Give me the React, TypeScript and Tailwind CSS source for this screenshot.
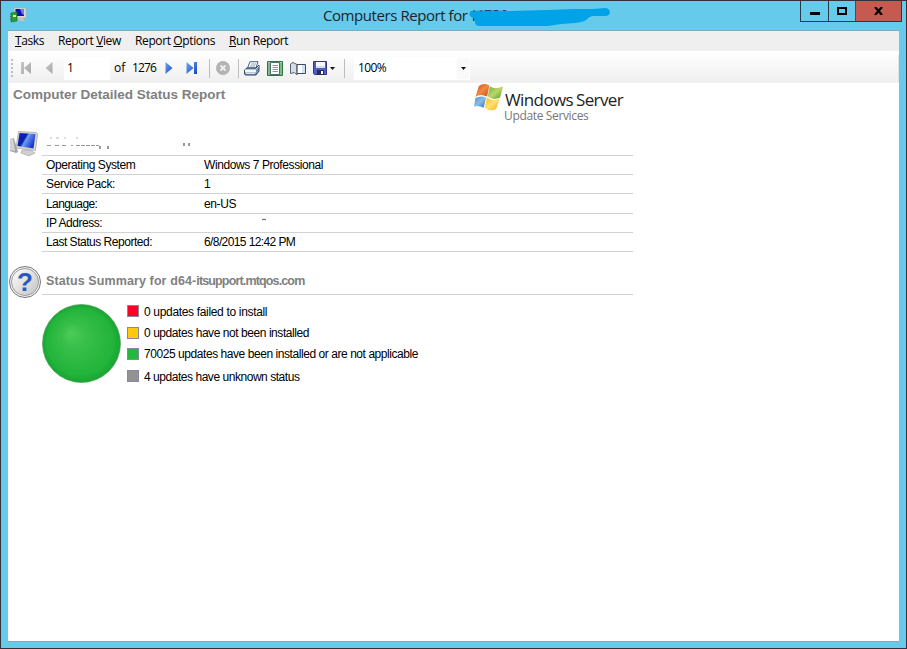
import React from "react";

const details = [
  { label: "Operating System", value: "Windows 7 Professional", h: "h-[19px]", lt: "tracking-[-0.42px]", vt: "tracking-[-0.41px]" },
  { label: "Service Pack:", value: "1", h: "h-[19px]", lt: "tracking-[-0.33px]", vt: "" },
  { label: "Language:", value: "en-US", h: "h-[20px]", lt: "tracking-[-0.6px]", vt: "tracking-[-0.4px]" },
  { label: "IP Address:", value: "", h: "h-[19px]", lt: "tracking-[-0.45px]", vt: "" },
  { label: "Last Status Reported:", value: "6/8/2015 12:42 PM", h: "h-[19px]", lt: "tracking-[-0.48px]", vt: "tracking-[-0.6px]" },
];

const legend = [
  { color: "bg-[#fb0321]", text: "0 updates failed to install", h: "h-[22px]", t: "leading-[16px] tracking-[-0.33px]" },
  { color: "bg-[#ffc90e]", text: "0 updates have not been installed", h: "h-[21px]", t: "leading-[14px] tracking-[-0.44px]" },
  { color: "bg-[#22b93c]", text: "70025 updates have been installed or are not applicable", h: "h-[22px]", t: "leading-[14px] tracking-[-0.44px]" },
  { color: "bg-[#929292]", text: "4 updates have unknown status", h: "h-[24px]", t: "leading-[16px] tracking-[-0.46px]" },
];

function AppIcon() {
  return (
    <svg width="17" height="17" viewBox="0 0 17 17">
      <path d="M4 1h12v10H5z" fill="#ddd9cf" stroke="#b6b3ab" strokeWidth=".7" />
      <path d="M5.500 2H14v7H5.500z" fill="#1010b8" />
      <path d="M10 2h4v6l-2-1z" fill="#5c86ed" />
      <path d="M8 11h5l2 3H9z" fill="#c5c2bb" />
      <path d="M1 6l6-1v9l-6 1z" fill="#2c9c33" stroke="#17721f" strokeWidth=".6" />
      <path d="M3 8h3v2H3z" fill="#d6f0c0" />
      <path d="M0 7h2M0 9.500h2M0 12h2" stroke="#526c57" />
    </svg>
  );
}

function ScribbledTitle() {
  return (
    <svg className="absolute left-[467px] top-[5px]" width="146" height="24" viewBox="467 5 146 24">
      <path d="M471 11C468 14 470 17 473 18L475 22Q475 26 480 26L548 26L561 24L575 23Q586 22 588 18L592 16L606 16Q610 15 610 12Q609 8 605 8L593 9L574 9L548 10L510 11L490 10Z" fill="#00a2e8" />
      <path d="M473 11h2M480 11h2M485 10.500h6M494 10.500h4M503 10.500h3" stroke="#31434c" />
      <path d="M473.500 18v3" stroke="#31434c" strokeWidth="1.300" />
    </svg>
  );
}

function Nav({ kind }: { kind: "first" | "prev" | "next" | "last" }) {
  const gray = kind === "first" || kind === "prev";
  const id = "nav-" + kind;
  return (
    <svg width="14" height="14" viewBox="0 0 14 14" className="block">
      <defs>
        <linearGradient id={id} x2="1" y2="1">
          <stop stopColor={gray ? "#c8c8c8" : "#71a5fa"} />
          <stop offset="1" stopColor={gray ? "#a7a7a7" : "#1646c0"} />
        </linearGradient>
      </defs>
      {kind === "first" && <path d="M1 1h3v12H1zM11 1v12L4 7z" fill={`url(#${id})`} />}
      {kind === "prev" && <path d="M8.500 1v12L1.500 7z" fill={`url(#${id})`} />}
      {kind === "next" && <path d="M2.500 1l7 6-7 6z" fill={`url(#${id})`} />}
      {kind === "last" && <path d="M1.500 1l7 6-7 6zM9 1h3v12H9z" fill={`url(#${id})`} />}
    </svg>
  );
}

function StopIcon() {
  return (
    <svg width="14" height="14" viewBox="0 0 14 14">
      <circle cx="7" cy="7" r="6.700" fill="#b4b4b4" stroke="#a9a9a9" strokeWidth=".5" />
      <path d="M4.500 4.500l5 5M9.500 4.500l-5 5" stroke="#ededed" strokeWidth="2" />
    </svg>
  );
}

function PrinterIcon() {
  return (
    <svg width="16" height="15" viewBox="0 0 16 15">
      <path d="M6 .7h8L12 7H3.500z" fill="#fafcff" stroke="#495e7f" />
      <path d="M7 3h5M6 5h5" stroke="#91a4bc" />
      <path d="M3 7h9l3-3v6l-3 4H1.500Q.5 14 .5 12V9z" fill="#7a91b4" stroke="#354a69" />
      <path d="M1 8.500h11v3H1z" fill="#f3f6fa" />
      <path d="M2 12.500h9" stroke="#dde6f1" />
      <path d="M12 8l3-3" stroke="#c5d2e5" />
    </svg>
  );
}

function LayoutIcon() {
  return (
    <svg width="16" height="15" viewBox="0 0 16 15">
      <path d="M.5.5h15v14H.5z" fill="#7fb988" stroke="#2c7441" />
      <path d="M1 1h14v1H1z" fill="#b5d5b6" />
      <path d="M3.500 1.500h9v12h-9z" fill="#fff" stroke="#334b5e" strokeWidth=".8" />
      <path d="M5.500 4.500h5.500M5.500 6.500h5.500M5.500 8.500h5.500M5.500 10.500h5.500" stroke="#8995a0" />
    </svg>
  );
}

function BookIcon() {
  return (
    <svg width="16" height="15" viewBox="0 0 16 15">
      <path d="M.5 3L3 1.500l4 2v10.500l-2.500-2.500-4 1z" fill="#d5dce7" stroke="#5b6370" />
      <path d="M7 3.500h8.500v9H7z" fill="#cfe0f6" stroke="#424b5c" />
      <path d="M8 4h4v8H8z" fill="#fff" />
    </svg>
  );
}

function SaveIcon() {
  return (
    <svg width="14" height="14" viewBox="0 0 14 14">
      <path d="M.5.5h13v13h-12l-1-1z" fill="#525cc5" stroke="#35378a" />
      <path d="M3 1h9v6H3z" fill="#f6f9ff" />
      <path d="M3 5h9v2H3z" fill="#d0dff2" />
      <path d="M4 9h7v5H4z" fill="#292d53" />
      <path d="M8 10h2v3H8z" fill="#fff" />
    </svg>
  );
}

function Caret() {
  return <svg width="5" height="3" viewBox="0 0 5 3" className="block"><path d="M0 0h5L2.500 3z" fill="#111" /></svg>;
}

function Divider() {
  return <div className="h-[19px] w-px shrink-0 bg-[#bdbdbd]" />;
}

function Flag() {
  return (
    <svg width="30" height="29" viewBox="0 0 31 29">
      <defs>
        <linearGradient id="flag-red" x2="1" y2="1"><stop stopColor="#d84a20" /><stop offset=".5" stopColor="#ef8a41" /><stop offset="1" stopColor="#cf401d" /></linearGradient>
        <linearGradient id="flag-green" x2="1" y2="1"><stop stopColor="#6faf35" /><stop offset=".5" stopColor="#bad66a" /><stop offset="1" stopColor="#509b26" /></linearGradient>
        <linearGradient id="flag-blue" x2="1" y2="1"><stop stopColor="#4f8fce" /><stop offset=".5" stopColor="#87bee8" /><stop offset="1" stopColor="#286db0" /></linearGradient>
        <linearGradient id="flag-yellow" x2="1" y2="1"><stop stopColor="#f5b91c" /><stop offset=".5" stopColor="#ffe271" /><stop offset="1" stopColor="#f1a915" /></linearGradient>
      </defs>
      <path d="M5 2.500Q10-1 16 2L13.500 13.500Q6 10 1.500 14z" fill="url(#flag-red)" />
      <path d="M16.500 3Q22 7 30 3L27 14.500Q20 18 14 13.500z" fill="url(#flag-green)" />
      <path d="M1.500 15Q7 12 12.500 14.500L10 25Q4 22 0 24z" fill="url(#flag-blue)" />
      <path d="M13.500 14.500Q19 19 26.500 15.500L23 26Q17 30 11 25z" fill="url(#flag-yellow)" />
    </svg>
  );
}

function ComputerIcon() {
  return (
    <svg width="29" height="28" viewBox="0 0 29 28">
      <defs>
        <linearGradient id="screen" x2="1" y2=".5"><stop stopColor="#1428bd" /><stop offset=".45" stopColor="#0a1ca8" /><stop offset=".55" stopColor="#6c9df5" /><stop offset="1" stopColor="#1835ce" /></linearGradient>
      </defs>
      <path d="M0 9l4-1 4 14-2 1-6-2z" fill="#a5a5a5" />
      <path d="M0 9l3-1 2 13-5-1z" fill="#d2d2d2" />
      <path d="M12 20h8l5 3-6 3-8-3z" fill="#d0d0d0" stroke="#a0a0a0" strokeWidth=".6" />
      <path d="M8.500 1.500L26 2.500Q28 3 27.500 5l-2 15.500L6 18z" fill="#dad8d2" stroke="#a3a19c" strokeWidth=".7" />
      <path d="M9.500 3l16 1-2 14.500L7.500 16z" fill="url(#screen)" />
    </svg>
  );
}

function HelpIcon() {
  return (
    <div className="flex h-8 w-8 items-center justify-center rounded-full border border-[#777] bg-[#f4f4f4]">
      <div className="flex h-[28px] w-[28px] items-center justify-center rounded-full border border-[#9a9a9a] bg-linear-to-br from-white to-[#c4c4c4]">
        <span className="font-['Liberation_Sans',Arial,sans-serif] text-[26px] leading-[24px] font-bold text-[#2c58c2]">?</span>
      </div>
    </div>
  );
}

function StatusPie() {
  return (
    <svg width="80" height="80" viewBox="0 0 80 80">
      <defs>
        <radialGradient id="pie" cx=".5" cy=".5" fx=".36" fy=".36" r=".5"><stop stopColor="#4bce58" /><stop offset=".3" stopColor="#39bf4b" /><stop offset=".85" stopColor="#22b43b" /><stop offset="1" stopColor="#18a533" /></radialGradient>
      </defs>
      <circle cx="39.500" cy="39.500" r="39" fill="url(#pie)" stroke="#529d5a" strokeWidth=".7" />
    </svg>
  );
}

export default function App() {
  return (
    <div className="flex h-[649px] w-[907px] flex-col overflow-hidden border border-[#33323b] bg-[#66caea] px-[7px] pb-[6px] font-['Liberation_Sans',Arial,sans-serif] text-[12px] text-black">
      <header className="flex h-[29px] shrink-0 font-['Open_Sans','Noto_Sans',sans-serif]">
        <div className="w-[315px] pt-[6px] pl-[2px]"><AppIcon /></div>
        <h1 className="pt-[3px] text-[15px] leading-[23px] tracking-[-0.43px] whitespace-nowrap text-[#17262c]">Computers Report for</h1>
        <ScribbledTitle />
        <div className="mr-[-3px] ml-auto flex h-[21px] border-x border-b border-[#293b46]">
          <div className="flex w-[27px] justify-center pt-[11px]"><i className="h-[3px] w-[10px] bg-black" /></div>
          <div className="flex w-[27px] justify-center border-l border-[#293b46] pt-[6px]"><i className="h-[8px] w-[10px] border-2 border-black" /></div>
          <div className="flex w-[46px] justify-center border-l border-[#743b3b] bg-[#c45a50] pt-[6px]">
            <svg width="9" height="8" viewBox="0 0 9 8"><path d="M1 0l7 8M8 0L1 8" stroke="#000" strokeWidth="2.200" /></svg>
          </div>
        </div>
      </header>

      <div className="flex min-h-0 flex-1 flex-col border-y border-[#84a9b8] bg-white">
        <nav className="flex h-[20px] shrink-0 bg-[#efefef] pl-[7px] font-['Open_Sans','Noto_Sans',sans-serif] text-[12px] leading-[20px]">
          <span className="w-[43px] tracking-[-0.4px]"><u>T</u>asks</span>
          <span className="w-[77px] tracking-[-0.4px]">Report <u>V</u>iew</span>
          <span className="w-[94px] tracking-[-0.38px]">Report <u>O</u>ptions</span>
          <span className="tracking-[-0.4px]"><u>R</u>un Report</span>
        </nav>
        <div className="flex h-[32px] shrink-0 items-center border-b border-[#f1f1f1] bg-linear-to-b from-white to-[#f0f0f0] pt-[3px] font-['Open_Sans','Noto_Sans',sans-serif]">
          <div className="ml-[3px] flex w-[9px] flex-col gap-[2px]">
            {[0, 1, 2, 3, 4].map((n) => <i key={n} className="h-[2px] w-[2px] bg-[#bebebe]" />)}
          </div>
          <div className="w-[24px]"><Nav kind="first" /></div>
          <div className="w-[20px]"><Nav kind="prev" /></div>
          <div className="h-[23px] w-[46px] bg-white pl-[3px] leading-[22px]">1</div>
          <span className="w-[18px] pl-[4px]">of</span>
          <span className="w-[35px] pl-[4px] tracking-[-0.85px]">1276</span>
          <div className="w-[22px]"><Nav kind="next" /></div>
          <div className="w-[24px]"><Nav kind="last" /></div>
          <Divider />
          <div className="w-[28px] pl-[6px]"><StopIcon /></div>
          <Divider />
          <div className="ml-[5px] w-[23px]"><PrinterIcon /></div>
          <div className="w-[23px]"><LayoutIcon /></div>
          <div className="w-[23px]"><BookIcon /></div>
          <div className="flex w-[31px] items-center gap-[3px]"><SaveIcon /><Caret /></div>
          <Divider />
          <div className="ml-[9px] flex h-[23px] w-[116px] items-center justify-between bg-white pr-[1px] pl-[4px]">
            <span className="tracking-[-0.65px]">100%</span>
            <div className="flex h-[21px] w-[12px] items-center justify-center bg-[#f9f9f9]"><Caret /></div>
          </div>
          <div className="ml-auto h-[27px] w-px bg-[#e2e2e2]" />
        </div>

        <main className="flex w-[626px] flex-col">
          <div className="flex h-[46px] justify-between pl-[5px]">
            <h2 className="pt-[3px] text-[13.5px] leading-[18px] font-bold text-[#808080]">Computer Detailed Status Report</h2>
            <div className="flex w-[160px]">
              <Flag />
              <div className="pt-[7px] whitespace-nowrap font-['Open_Sans','Noto_Sans',sans-serif]">
                <div className="h-[20px] pl-[1px] text-[17px] leading-[20px] tracking-[-0.6px] text-[#222]">Windows<span className="-ml-[1px]"> Server</span></div>
                <div className="text-[12px] leading-[12px] tracking-[-0.35px] text-[#777]">Update Services</div>
              </div>
            </div>
          </div>
          <section className="flex">
            <div className="w-[34px] shrink-0 pt-[1px] pl-[2px]"><ComputerIcon /></div>
            <div className="w-[591px]">
              <div className="h-[27px] border-b border-[#d2d2d2]">
                <svg width="155" height="24" viewBox="42 129 155 24">
                  <path d="M47 145.500h5M55 145.500h5M62 145.500h5M71 145.500h2M76 145.500h23" stroke="#999" strokeDasharray="4 1" />
                  <path d="M50 138h2M56 138h3M64 138h2M76 138h2" stroke="#bbb" />
                  <path d="M100 146v3M108 146v3M184 143v3M189 143v3" stroke="#777" strokeWidth="1.500" />
                </svg>
              </div>
              {details.map((row) => (
                <div key={row.label} className={`flex items-center border-b border-[#d2d2d2] pl-[4px] leading-[18px] ${row.h}`}>
                  <span className={`w-[158px] ${row.lt}`}>{row.label}</span>
                  <span className={row.vt}>{row.value}</span>
                  {!row.value && <svg className="mb-[8px] ml-[57px]" width="6" height="3"><path d="M1 2l2-1 2 1" fill="none" stroke="#555" /></svg>}
                </div>
              ))}
            </div>
          </section>
          <section className="mt-[14px] flex">
            <div className="w-[34px] shrink-0 pl-[1px]"><HelpIcon /></div>
            <div className="w-[591px]">
              <h3 className="h-[29px] border-b border-[#d2d2d2] pt-[6px] pl-[4px] text-[12.5px] leading-[18px] font-bold text-[#808080]">
                <span className="tracking-[0.1px]">Status Summary for d64-</span><span className="tracking-[-0.85px]">itsupport.mtqos.com</span>
              </h3>
              <div className="flex pt-[9px]">
                <div className="w-[85px]"><StatusPie /></div>
                <div>
                  {legend.map((row) => (
                    <div key={row.text} className={`flex ${row.h}`}>
                      <i className={`mt-[1px] h-[12px] w-[12px] shrink-0 border border-[#8787a0] ${row.color}`} />
                      <span className={`ml-[5px] whitespace-nowrap ${row.t}`}>{row.text}</span>
                    </div>
                  ))}
                </div>
              </div>
            </div>
          </section>
        </main>
      </div>
    </div>
  );
}
